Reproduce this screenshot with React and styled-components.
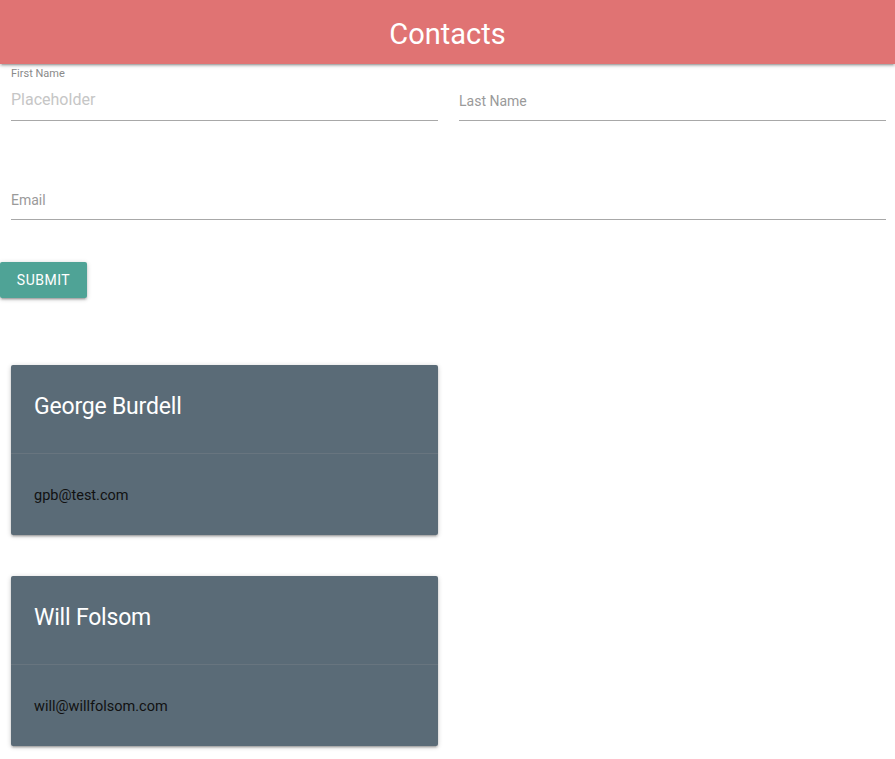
import React from "react";
import styled, { createGlobalStyle } from "styled-components";

const GlobalStyle = createGlobalStyle`
  body {
    margin: 0;
    background: #ffffff;
    font-family: Roboto, "Liberation Sans", sans-serif;
  }
  * { box-sizing: border-box; }
`;

const contacts = [
  { name: "George Burdell", email: "gpb@test.com" },
  { name: "Will Folsom", email: "will@willfolsom.com" },
];

const App = () => {
  return (
    <Page>
      <GlobalStyle />
      <Header>
        <Brand>Contacts</Brand>
      </Header>
      <Form onSubmit={(e) => e.preventDefault()}>
        <Row>
          <Field>
            <SmallLabel>First Name</SmallLabel>
            <Input placeholder="Placeholder" />
          </Field>
          <Field>
            <Input />
            <InlineLabel>Last Name</InlineLabel>
          </Field>
        </Row>
        <EmailRow>
          <Field>
            <Input />
            <InlineLabel>Email</InlineLabel>
          </Field>
        </EmailRow>
        <SubmitButton type="submit">Submit</SubmitButton>
      </Form>
      <CardList>
        {contacts.map((c) => (
          <Card key={c.email}>
            <CardContent>
              <CardTitle>{c.name}</CardTitle>
            </CardContent>
            <CardAction>
              <Email>{c.email}</Email>
            </CardAction>
          </Card>
        ))}
      </CardList>
    </Page>
  );
};

const Page = styled.div`
  min-height: 759px;
`;

const Header = styled.header`
  height: 64px;
  padding-top: 3px;
  background: #e07373;
  display: flex;
  align-items: center;
  justify-content: center;
  box-shadow: 0 2px 2px 0 rgba(0, 0, 0, 0.14), 0 3px 1px -2px rgba(0, 0, 0, 0.12),
    0 1px 5px 0 rgba(0, 0, 0, 0.2);
  position: relative;
  z-index: 1;
`;

const Brand = styled.h1`
  margin: 0;
  color: #ffffff;
  font-size: 29px;
  font-weight: 400;
`;

const Form = styled.form`
  display: flex;
  flex-direction: column;
  align-items: flex-start;
`;

const Row = styled.div`
  width: 100%;
  display: grid;
  grid-template-columns: 1fr 1fr;
  column-gap: 21px;
  padding: 0 9px 0 11px;
`;

const EmailRow = styled.div`
  width: 100%;
  padding: 0 9px 0 11px;
  margin-top: 42px;
`;

const Field = styled.div`
  position: relative;
  height: 57px;
  display: flex;
  flex-direction: column;
  justify-content: flex-end;
`;

const SmallLabel = styled.label`
  font-size: 11px;
  color: #8a8a8a;
  line-height: 13px;
  margin-bottom: 3px;
`;

const InlineLabel = styled.label`
  position: absolute;
  left: 0;
  bottom: 12px;
  font-size: 14px;
  color: #9a9a9a;
  pointer-events: none;
`;

const Input = styled.input`
  width: 100%;
  height: 38px;
  border: none;
  border-bottom: 1px solid #a8a8a8;
  outline: none;
  padding: 0 0 4px 0;
  font-family: Roboto, "Liberation Sans", sans-serif;
  font-size: 16px;
  color: #333;
  background: transparent;

  &::placeholder {
    color: #c6c6c6;
  }
`;

const SubmitButton = styled.button`
  margin-top: 42px;
  height: 36px;
  width: 87px;
  border: none;
  border-radius: 2px;
  background: #4fa396;
  color: #ffffff;
  font-family: Roboto, "Liberation Sans", sans-serif;
  font-size: 14px;
  letter-spacing: 0.5px;
  text-transform: uppercase;
  box-shadow: 0 2px 2px 0 rgba(0, 0, 0, 0.14), 0 3px 1px -2px rgba(0, 0, 0, 0.12),
    0 1px 5px 0 rgba(0, 0, 0, 0.2);
  cursor: pointer;
`;

const CardList = styled.div`
  display: flex;
  flex-direction: column;
  gap: 41px;
  margin-top: 67px;
  padding: 0 0 13px 11px;
`;

const Card = styled.div`
  width: 427px;
  height: 170px;
  background: #5a6b77;
  border-radius: 2px;
  box-shadow: 0 2px 2px 0 rgba(0, 0, 0, 0.14), 0 3px 1px -2px rgba(0, 0, 0, 0.12),
    0 1px 5px 0 rgba(0, 0, 0, 0.2);
  display: flex;
  flex-direction: column;
`;

const CardContent = styled.div`
  padding: 26px 24px 24px 23px;
`;

const CardTitle = styled.span`
  display: block;
  font-size: 23px;
  line-height: 32px;
  font-weight: 400;
  letter-spacing: -0.2px;
  color: #ffffff;
  margin-bottom: 6px;
`;

const CardAction = styled.div`
  flex: 1;
  display: flex;
  align-items: center;
  padding: 2px 24px 0 23px;
  border-top: 1px solid rgba(160, 160, 160, 0.2);
`;

const Email = styled.p`
  margin: 0;
  font-size: 14.5px;
  color: #111111;
`;

export default App;
